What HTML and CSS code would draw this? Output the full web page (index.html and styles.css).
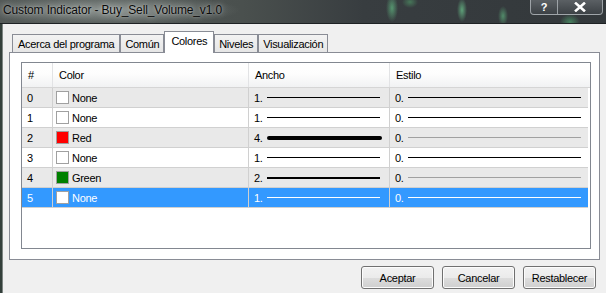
FILE: index.html
```html
<!DOCTYPE html>
<html lang="es">
<head>
  <meta charset="UTF-8">
  <title>Custom Indicator - Buy_Sell_Volume_v1.0</title>
  <link rel="stylesheet" href="styles.css">
</head>
<body>
  <div class="titlebar">
    <span class="title">Custom Indicator - Buy_Sell_Volume_v1.0</span>
    <div class="caption-btns">
      <span class="cap help">?</span>
      <span class="cap close">
        <svg width="12" height="10" viewBox="0 0 12 10"><path d="M2 1.5 L10 8.5 M10 1.5 L2 8.5" stroke="#fff" stroke-width="2.6" stroke-linecap="square"/></svg>
      </span>
    </div>
  </div>

  <div class="main">
    <div class="frame-edge"></div>
    <div class="client">
      <div class="tabs">
        <div class="tab first">Acerca del programa</div>
        <div class="tab">Común</div>
        <div class="tab active">Colores</div>
        <div class="tab">Niveles</div>
        <div class="tab">Visualización</div>
      </div>

      <div class="panel">
        <div class="list">
          <div class="row head">
            <div class="c num">#</div>
            <div class="c color">Color</div>
            <div class="c width">Ancho</div>
            <div class="c style">Estilo</div>
          </div>

          <div class="row even">
            <div class="c num">0</div>
            <div class="c color"><span class="swatch"></span>None</div>
            <div class="c width"><span class="val">1.</span><span class="line w1"></span></div>
            <div class="c style"><span class="val">0.</span><span class="line s-on"></span></div>
          </div>
          <div class="row">
            <div class="c num">1</div>
            <div class="c color"><span class="swatch"></span>None</div>
            <div class="c width"><span class="val">1.</span><span class="line w1"></span></div>
            <div class="c style"><span class="val">0.</span><span class="line s-on"></span></div>
          </div>
          <div class="row even">
            <div class="c num">2</div>
            <div class="c color"><span class="swatch red"></span>Red</div>
            <div class="c width"><span class="val">4.</span><span class="line w4"></span></div>
            <div class="c style"><span class="val">0.</span><span class="line s-off"></span></div>
          </div>
          <div class="row">
            <div class="c num">3</div>
            <div class="c color"><span class="swatch"></span>None</div>
            <div class="c width"><span class="val">1.</span><span class="line w1"></span></div>
            <div class="c style"><span class="val">0.</span><span class="line s-on"></span></div>
          </div>
          <div class="row even">
            <div class="c num">4</div>
            <div class="c color"><span class="swatch green"></span>Green</div>
            <div class="c width"><span class="val">2.</span><span class="line w2"></span></div>
            <div class="c style"><span class="val">0.</span><span class="line s-off"></span></div>
          </div>
          <div class="row selected">
            <div class="c num">5</div>
            <div class="c color"><span class="swatch"></span>None</div>
            <div class="c width"><span class="val">1.</span><span class="line w1"></span></div>
            <div class="c style"><span class="val">0.</span><span class="line s-on"></span></div>
          </div>
        </div>
      </div>

      <div class="buttons">
        <button class="btn">Aceptar</button>
        <button class="btn">Cancelar</button>
        <button class="btn">Restablecer</button>
      </div>
    </div>
  </div>
</body>
</html>
```

FILE: styles.css
```css
body {
  margin: 0;
  width: 606px;
  height: 293px;
  overflow: hidden;
  background: #f0f0f0;
  font-family: "Liberation Sans", Arial, sans-serif;
  font-size: 11px;
  letter-spacing: -0.3px;
  color: #000;
  display: flex;
  flex-direction: column;
}

/* title bar (aero glass) */
.titlebar {
  height: 23px;
  border-bottom: 1px solid #1e2224;
  display: flex;
  justify-content: space-between;
  align-items: flex-start;
  background:
    radial-gradient(ellipse 6px 14px at 392px 8px, rgba(110, 220, 150, 0.55), transparent),
    radial-gradient(ellipse 5px 12px at 462px 10px, rgba(120, 230, 160, 0.6), transparent),
    radial-gradient(ellipse 5px 10px at 503px 16px, rgba(110, 220, 150, 0.5), transparent),
    radial-gradient(ellipse 10px 8px at 570px 22px, rgba(90, 200, 130, 0.5), transparent),
    radial-gradient(ellipse 8px 6px at 410px 2px, rgba(90, 190, 120, 0.45), transparent),
    radial-gradient(ellipse 130px 16px at 110px 10px, rgba(160, 168, 164, 0.75), transparent),
    linear-gradient(90deg, #545a58 0%, #4a504e 40%, #383d40 60%, #33383b 100%);
}

.title {
  padding: 3px 0 0 3px;
  font-family: "Liberation Sans", Arial, sans-serif;
  font-size: 12px;
  letter-spacing: -0.15px;
  color: #0a0a0a;
  text-shadow: 0 0 6px rgba(255, 255, 255, 0.6), 0 0 2px rgba(255, 255, 255, 0.4);
}

.caption-btns {
  display: flex;
  margin-right: 3px;
  margin-top: -1px;
}

.cap {
  height: 14px;
  border: 1px solid rgba(190, 195, 200, 0.7);
  background: linear-gradient(#5b6064, #3c4145);
  display: flex;
  align-items: center;
  justify-content: center;
  color: #fff;
  font-weight: bold;
  font-size: 11px;
}

.help {
  width: 26px;
  border-radius: 0 0 0 4px;
}

.close {
  width: 44px;
  border-left: none;
  border-radius: 0 0 4px 0;
}

/* window body */
.main {
  flex: 1;
  display: flex;
}

.frame-edge {
  width: 2px;
  background: #34403b;
  border-right: 1px solid #7d8582;
}

.client {
  flex: 1;
  padding: 7px 6px 0 6px;
  display: flex;
  flex-direction: column;
}

/* tabs */
.tabs {
  display: flex;
  align-items: flex-end;
  margin-left: 3px;
  margin-bottom: -1px;
}

.tab {
  height: 18px;
  line-height: 18px;
  padding: 0 4px;
  border: 1px solid #898c95;
  border-bottom: none;
  background: linear-gradient(#f3f3f3, #e5e5e5);
}

.tab.first {
  padding: 0 5px;
}

.tab.active {
  position: relative;
  z-index: 1;
  height: 21px;
  line-height: 19px;
  padding: 0 6px;
  background: #fff;
}

.panel {
  border: 1px solid #898c95;
  background: #fff;
  padding: 9px 8px 10px 11px;
}

/* list view */
.list {
  height: 185px;
  border: 1px solid #828790;
  background: #fff;
}

.row {
  display: flex;
  height: 19px;
  border-bottom: 1px solid #d0d0d0;
  width: 566px;
}

.row.even {
  background: #e9e9e9;
}

.row.head {
  height: 24px;
  width: 568px;
  border-bottom: 1px solid #d5d5d5;
  background: linear-gradient(#ffffff 0%, #fdfdfd 45%, #f1f2f3 100%);
}

.row.selected {
  background: #3399ff;
  color: #fff;
}

.c {
  display: flex;
  align-items: center;
  box-sizing: border-box;
  border-right: 1px solid #d0d0d0;
}

.head .c {
  border-right: 1px solid #e2e3e5;
  padding-left: 6px;
}

.num {
  width: 31px;
  padding-left: 5px;
}

.color {
  width: 196px;
  padding-left: 3px;
}

.width {
  width: 141px;
  padding: 0 9px 0 5px;
}

.style {
  width: 198px;
  padding: 0 7px 0 5px;
  border-right: none;
}

.head .style {
  width: 200px;
  border-right: none;
}

.swatch {
  width: 11px;
  height: 11px;
  border: 1px solid #a0a0a0;
  background: #fff;
  margin-right: 3px;
}

.swatch.red {
  background: #ff0000;
}

.swatch.green {
  background: #008000;
}

.val {
  width: 13px;
}

.line {
  flex: 1;
  background: #000;
}

.w1 {
  height: 1px;
}

.w2 {
  height: 2px;
}

.w4 {
  height: 4px;
  border-radius: 2px;
  margin-right: -2px;
}

.s-on {
  height: 1px;
}

.s-off {
  height: 1px;
  background: #a0a0a0;
}

.selected .line {
  background: #fff;
}

/* dialog buttons */
.buttons {
  display: flex;
  justify-content: flex-end;
  gap: 8px;
  margin: 6px 4px 0 0;
}

.btn {
  width: 73px;
  height: 23px;
  padding: 0;
  font-family: "Liberation Sans", Arial, sans-serif;
  font-size: 11px;
  letter-spacing: -0.3px;
  color: #000;
  border: 1px solid #707070;
  border-radius: 3px;
  box-shadow: inset 0 0 0 1px #fcfcfc;
  background: linear-gradient(#f2f2f2 0%, #ebebeb 50%, #dddddd 51%, #cfcfcf 100%);
}
```
